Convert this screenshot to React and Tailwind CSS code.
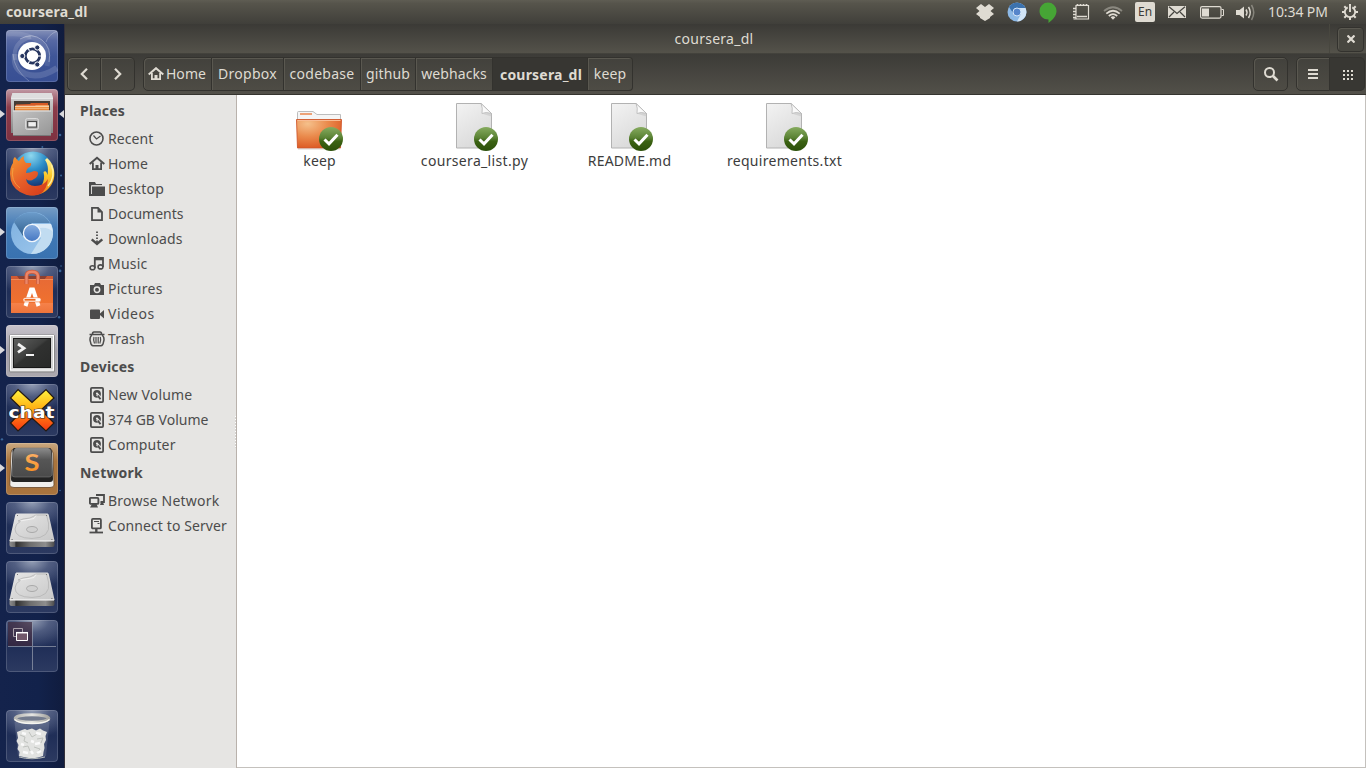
import React from "react";

/* ---------- launcher ---------- */

const tileBase =
  "relative flex h-[52px] w-[52px] shrink-0 rounded-[4px] shadow-[inset_0_0_0_1px_rgba(255,255,255,0.16)]";

const GLASS =
  "bg-[radial-gradient(ellipse_75%_55%_at_50%_0%,rgba(165,175,195,0.85),rgba(120,132,162,0.45)_45%,rgba(60,75,115,0)),linear-gradient(#35426a,#1f2e57_50%,#2c3a61)]";

function Art({ children }) {
  return (
    <svg viewBox="0 0 52 52" className="h-[52px] w-[52px]">
      {children}
    </svg>
  );
}

function DashIcon() {
  return (
    <Art>
      <g fill="none" stroke="#fff">
        <path d="M14 9Q26 2 36 10Q46 18 43 32" strokeWidth="1" opacity=".35" />
        <path d="M1 4Q20 2 34 12Q44 20 41 36" strokeWidth="5" opacity=".1" />
        <path d="M9 24Q7 40 20 44Q34 49 51 38" strokeWidth="6" opacity=".14" />
        <path d="M9 30Q6 12 25 7" strokeWidth="4" opacity=".14" />
        <path d="M7 24Q8 40 23 51M51 1Q42 5 40 12" strokeWidth="1" opacity=".25" />
      </g>
      <circle cx="26" cy="26" r="14" fill="#fff" />
      <circle cx="26.500" cy="26" r="7.200" fill="none" stroke="#26355f" strokeWidth="2.800" />
      <path d="M32 26h4M23.500 20.800l-2-3.500M23.500 31.200l-2 3.500" stroke="#fff" strokeWidth="1.100" />
      <g fill="#26355f" stroke="#fff" strokeWidth="1">
        <circle cx="16.300" cy="26" r="2.600" />
        <circle cx="31.300" cy="17.500" r="2.600" />
        <circle cx="31.300" cy="34.500" r="2.600" />
      </g>
    </Art>
  );
}

function FilesIcon() {
  return (
    <Art>
      <defs>
        <linearGradient id="cab" x2="0" y2="1">
          <stop stopColor="#dcdcdc" />
          <stop offset=".2" stopColor="#c8c8c8" />
          <stop offset="1" stopColor="#858585" />
        </linearGradient>
        <linearGradient id="drawer" x2="1" y2="1">
          <stop stopColor="#c4c4c4" />
          <stop offset="1" stopColor="#969696" />
        </linearGradient>
        <linearGradient id="papers" x2="0" y2="1">
          <stop stopColor="#f6a04e" />
          <stop offset="1" stopColor="#e37f33" />
        </linearGradient>
      </defs>
      <path d="M6.500 4h39L47 9v35H5V9z" fill="url(#cab)" />
      <path d="M6.500 4h39L47 9H5z" fill="#dedede" />
      <path d="M5 9.500h42" stroke="#efefef" strokeWidth=".8" />
      <path d="M8 12h36v10H8z" fill="#453c36" />
      <path d="M10 15.500L24 15l1-1h17v6H10z" fill="#d65a26" />
      <path d="M9 17h20l1-.8h13V22H9z" fill="url(#papers)" />
      <path d="M9 17.300h34" stroke="#f8e0c4" strokeWidth="1.100" />
      <path d="M9 19.500h34" stroke="#f9c898" strokeWidth=".6" />
      <path d="M7 21.500h38V47H7z" fill="url(#drawer)" />
      <path d="M7 22h38" stroke="#e6e6e6" />
      <path d="M7 46.500h38" stroke="#787878" />
      <rect x="19.500" y="29.500" width="13" height="11" rx="2" fill="#b9b9b9" stroke="#dadada" />
      <rect x="21.700" y="32.500" width="8.800" height="5.600" fill="#efefef" stroke="#4c4c4c" strokeWidth="1.200" />
    </Art>
  );
}

function FirefoxIcon() {
  return (
    <Art>
      <defs>
        <radialGradient id="globe" cx=".45" cy=".1" r=".8">
          <stop stopColor="#8fd8ee" />
          <stop offset=".45" stopColor="#2b8dc8" />
          <stop offset="1" stopColor="#122e6c" />
        </radialGradient>
        <linearGradient id="fox" x2=".8" y2="1">
          <stop stopColor="#f59a2f" />
          <stop offset=".5" stopColor="#e8612a" />
          <stop offset="1" stopColor="#d63e1c" />
        </linearGradient>
        <linearGradient id="tail" x2="0" y2="1">
          <stop stopColor="#fff3a0" />
          <stop offset=".45" stopColor="#fbc92a" />
          <stop offset="1" stopColor="#ee7d1d" />
        </linearGradient>
      </defs>
      <circle cx="27" cy="24" r="20.500" fill="url(#globe)" />
      <path d="M41 10C50 17 51 32 43 40C38 46 30 48 22 47C35 42 40 34 37.500 24C40 22 41 25 41.500 27C42.500 21 42 16 39 12z" fill="url(#tail)" />
      <path d="M7 15Q7 10 9 9Q11 12 13 13Q15 9 18 8Q17 12 20 15L25 15Q26 18 22 20Q20 22 20 25Q24 25 28 23Q32 23 32 25Q32 29 28 31Q24 34 20 31Q21 38 29 38Q38 38 42 31Q41 42 34 46Q24 50 14 44Q4 38 4 26Q4 19 7 15z" fill="url(#fox)" />
      <path d="M7 20Q4 33 14 40" fill="none" stroke="#f8b74b" strokeWidth="1" opacity=".6" />
      <path d="M45.500 17Q50 29 42 38" fill="none" stroke="#fff1a1" strokeWidth="1.400" />
    </Art>
  );
}

function ChromiumIcon() {
  return (
    <Art>
      <defs>
        <linearGradient id="cr1" x2="0" y2="1">
          <stop stopColor="#6c9ccb" />
          <stop offset="1" stopColor="#326291" />
        </linearGradient>
        <linearGradient id="cr2" x2="1" y2="1">
          <stop stopColor="#7db0df" />
          <stop offset="1" stopColor="#9fc8ed" />
        </linearGradient>
        <linearGradient id="cr3" x2="0" y2="1">
          <stop stopColor="#87aedf" />
          <stop offset="1" stopColor="#4476c2" />
        </linearGradient>
      </defs>
      <circle cx="26" cy="26" r="21" fill="url(#cr2)" />
      <path d="M8 15A21 21 0 0 1 44 16H26L17 29z" fill="url(#cr1)" />
      <path d="M26 17H45A21 21 0 0 1 25 47L35 31z" fill="#c1dcf1" />
      <path d="M27 17H45L47 25Q42 20 34 21z" fill="#e4f0f9" opacity=".7" />
      <circle cx="26" cy="26" r="8.600" fill="url(#cr3)" stroke="#f2f7fc" strokeWidth="1.300" />
    </Art>
  );
}

function SoftwareIcon() {
  return (
    <Art>
      <defs>
        <linearGradient id="bag" x2="0" y2="1">
          <stop stopColor="#e76a35" />
          <stop offset=".7" stopColor="#f0712f" />
          <stop offset=".72" stopColor="#f58149" />
          <stop offset="1" stopColor="#ee743b" />
        </linearGradient>
      </defs>
      <path d="M5 10h7l2 3.500H5zM47 10h-7l-2 3.500h9z" fill="#d05a33" />
      <path d="M11 10h30l-3 4H14z" fill="#8d4030" />
      <path d="M5 13h42v34H5z" fill="url(#bag)" />
      <path d="M5 13.500h42" stroke="#f28c59" />
      <path d="M20.500 18V10Q20.500 5.700 26 5.700T32 10V18" fill="none" stroke="#c9583a" strokeWidth="4" />
      <path d="M20.500 18V10Q20.500 5.700 26 5.700T32 10V18" fill="none" stroke="#ec8667" strokeWidth="2.400" />
      <path d="M19.500 40L25 23.500h2L32.500 40" fill="none" stroke="#fff" strokeWidth="4" />
      <rect x="17" y="31.700" width="18" height="4.200" rx="2" fill="#fff" stroke="#ef7033" strokeWidth=".6" />
      <path d="M18.500 33.800h11" stroke="#ee6a20" strokeWidth="1.800" />
    </Art>
  );
}

function TerminalIcon() {
  return (
    <Art>
      <defs>
        <linearGradient id="term" x2="1" y2="1">
          <stop stopColor="#5f605f" />
          <stop offset=".45" stopColor="#3e3f3e" />
          <stop offset=".5" stopColor="#303130" />
          <stop offset="1" stopColor="#292a29" />
        </linearGradient>
      </defs>
      <rect x="3.500" y="10" width="45" height="37" rx="1" fill="#d2d2d2" stroke="#888" />
      <rect x="4.500" y="10.500" width="43" height="34.500" fill="none" stroke="#fff" />
      <rect x="7.500" y="13.500" width="37" height="29" fill="url(#term)" stroke="#171717" />
      <path d="M12 19l6 4.200-6 4.200" fill="none" stroke="#f2f2f2" strokeWidth="2.800" />
      <path d="M20 30h8" stroke="#f2f2f2" strokeWidth="2" />
    </Art>
  );
}

function XChatIcon() {
  return (
    <Art>
      <defs>
        <linearGradient id="xc" x2="0" y2="1">
          <stop offset=".05" stopColor="#ffec3a" />
          <stop offset=".45" stopColor="#ffb113" />
          <stop offset=".7" stopColor="#ff6b12" />
          <stop offset="1" stopColor="#f43712" />
        </linearGradient>
      </defs>
      <path d="M12 5.500L26 18.500 40 5.500 48 14 35 26 48 39 40 47 26 34 12 47 4.500 39 17 26 4.500 14z" fill="url(#xc)" stroke="#241a12" strokeWidth="1.200" />
      <text x="25.500" y="34.200" textAnchor="middle" textLength="46" lengthAdjust="spacingAndGlyphs" fontFamily="DejaVu Sans" fontWeight="bold" fontSize="15" fill="#fff" stroke="#3a3128" strokeWidth="1" paintOrder="stroke">
        chat
      </text>
    </Art>
  );
}

function SublimeIcon() {
  return (
    <Art>
      <defs>
        <linearGradient id="key" x2="0" y2="1">
          <stop stopColor="#8c8c8c" />
          <stop offset=".4" stopColor="#565656" />
          <stop offset="1" stopColor="#4a4a4a" />
        </linearGradient>
        <linearGradient id="ess" x2="0" y2="1">
          <stop stopColor="#fbb878" />
          <stop offset="1" stopColor="#f98a14" />
        </linearGradient>
      </defs>
      <path d="M8 6Q5 6 5 10L3.800 42Q4 44.500 8 44.500H44Q48 44.500 48 42L47 10Q46 6 44 6z" fill="#f0efed" stroke="#664628" strokeWidth=".8" />
      <path d="M8 5H44Q46 6 46 10L47 36Q47 39 44 39H8Q5 39 5 36L6.500 10Q6 6 8 5z" fill="#232323" />
      <path d="M10 5H42Q45 6 45 9L46 32Q45 34 43 34H9Q6 34 6 32L7.500 9Q8 6 10 5z" fill="url(#key)" stroke="#777" strokeWidth=".6" />
      <text x="26" y="28" textAnchor="middle" textLength="15" lengthAdjust="spacingAndGlyphs" fontFamily="Lato" fontWeight="bold" fontSize="23" fill="url(#ess)">
        S
      </text>
    </Art>
  );
}

function DriveIcon() {
  return (
    <Art>
      <defs>
        <linearGradient id="hd" x2="1" y2="1">
          <stop stopColor="#e6e6e6" />
          <stop offset="1" stopColor="#c8c8c8" />
        </linearGradient>
        <linearGradient id="hdf">
          <stop stopColor="#8d8d8d" />
          <stop offset=".12" stopColor="#6a6a6a" />
          <stop offset=".14" stopColor="#2e2e2e" />
          <stop offset=".45" stopColor="#6d6d6d" />
          <stop offset=".8" stopColor="#8e8e8e" />
          <stop offset="1" stopColor="#4b4b4b" />
        </linearGradient>
      </defs>
      <path d="M3.500 38h45v5q0 2-2 2h-41q-2 0-2-2z" fill="url(#hdf)" />
      <path d="M10.500 11.500h31q1 0 1.300 1.500L48.600 39H3.400L9.200 13Q9.500 11.500 10.500 11.500z" fill="url(#hd)" />
      <path d="M4 39h44" stroke="#fff" strokeWidth="1.200" />
      <path d="M12 19Q16 16.500 24 16L30 13H40.500L42.500 21Q45 36 26 36.500Q9 36 9 27Q9 22 15 19z" fill="none" stroke="#b5b5b5" strokeWidth=".8" />
      <path d="M14 19L28 16.500 30 13.500" fill="none" stroke="#f5f5f5" strokeWidth=".8" />
      <ellipse cx="26" cy="27.500" rx="5.500" ry="3" fill="#d0d0d0" stroke="#a5a5a5" strokeWidth=".9" />
      <path d="M5.500 37.500h1.200M46.500 37.500h-1.200M11 13.500h1M40 13.500h1" stroke="#777" />
    </Art>
  );
}

function WorkspaceIcon() {
  return (
    <Art>
      <path d="M2 2h24v24H2z" fill="#3d2538" opacity=".66" />
      <path d="M26.500 2v48M2 26.500h48" stroke="#99a0b0" opacity=".7" />
      <path d="M7.500 8.500h9v8h-9z" fill="none" stroke="#aaa1aa" />
      <path d="M10.500 12.500h11v8h-11z" fill="#71586a" stroke="#fff" />
      <path d="M10 12.700h12" stroke="#fff" strokeWidth="1.500" />
    </Art>
  );
}

function TrashCanIcon() {
  return (
    <Art>
      <defs>
        <linearGradient id="rim">
          <stop stopColor="#b4b4b0" />
          <stop offset=".5" stopColor="#e6e6e2" />
          <stop offset="1" stopColor="#a4a4a0" />
        </linearGradient>
      </defs>
      <path d="M9 12L12.500 46Q26 50 39.500 46L43 12z" fill="#ccd3dd" opacity=".18" stroke="#dde" strokeWidth=".8" />
      <path d="M11 22l5-2 3-1 2 1 5-1.500 4 2 4-2 3 2 4 1.500-1.500 4 .5 4-2 4 .5 4-1 4-.5 4-5 1.500Q26 48.500 20 47.500L13 46l.5-4-2-3 1-4-2-4 1.500-3z" fill="#e2e3e1" />
      <path d="M14 25l5 2-1 4 4 2M23 22l3 5 5-3M31 29l6-1-2 5M17 37l5-1 2 5M28 37l6 2-3 5" fill="none" stroke="#bfc2be" strokeWidth="1" />
      <path d="M16 23l4 1M30 23l5 1M25 31l3 1M15 34l3 1M17 42l5 1M29 34l5-1M31 43l4-2M25 41l2 3" stroke="#fafafa" strokeWidth="2.400" />
      <path d="M13 47Q26 50.500 39 47" fill="none" stroke="#c5c9c5" strokeWidth=".9" />
      <ellipse cx="26" cy="8.500" rx="16.800" ry="3.800" fill="#747c8e" stroke="url(#rim)" strokeWidth="3" />
      <path d="M8.500 9.500Q13 13.500 26 13.500T43.500 9.500" fill="none" stroke="#f5f5f0" strokeWidth="1.400" />
    </Art>
  );
}

const launchers = [
  { id: "dash", art: <DashIcon />, bg: "bg-[linear-gradient(#8490b8,#5769a4_20%,#3f5697_50%,#384f94)]" },
  { id: "files", art: <FilesIcon />, bg: "bg-[linear-gradient(#c19aa5,#8c3c4a_35%,#7d3141)]", left: true, right: true },
  { id: "firefox", art: <FirefoxIcon />, bg: GLASS },
  { id: "chromium", art: <ChromiumIcon />, bg: "bg-[linear-gradient(#769dc5,#4179b6_40%,#3972b0)]", left: true },
  { id: "software", art: <SoftwareIcon />, bg: GLASS },
  { id: "terminal", art: <TerminalIcon />, bg: "bg-[linear-gradient(#c8c4cc,#a29fa8_50%,#aba8ae)]", left: true },
  { id: "xchat", art: <XChatIcon />, bg: GLASS },
  { id: "sublime", art: <SublimeIcon />, bg: "bg-[linear-gradient(#caa981,#a8733c_35%,#a9743e)]", left: true },
  { id: "drive1", art: <DriveIcon />, bg: GLASS },
  { id: "drive2", art: <DriveIcon />, bg: GLASS },
  { id: "workspace", art: <WorkspaceIcon />, bg: GLASS },
];

function Launcher() {
  return (
    <aside className="relative flex w-[65px] shrink-0 flex-col border-r border-[#33303a] bg-[linear-gradient(90deg,#14234c,#12224b_60%,#101c3e)] pb-1.5">
      <svg className="absolute inset-0 h-full w-full" viewBox="0 0 65 744" fill="#4a83bb">
        <g opacity=".7">
          <circle cx="61" cy="107" r="1.300" />
          <circle cx="43" cy="119" r="1" />
          <circle cx="62" cy="148" r="1" />
          <circle cx="64" cy="161" r="1" />
          <circle cx="61" cy="245" r="1.400" />
          <circle cx="60" cy="292" r="1.200" />
          <circle cx="62" cy="240" r=".8" />
          <circle cx="2" cy="416" r="1.200" />
          <circle cx="61" cy="468" r=".8" />
        </g>
      </svg>
      <div className="flex flex-col gap-[7px] pt-[6px]">
        {launchers.map((l) => (
          <div key={l.id} className="relative flex pl-1.5">
            {l.left && (
              <svg viewBox="0 0 5 8" className="absolute left-0 top-[21px] h-2 w-[5px]">
                <path d="M0 0L5 4 0 8z" fill="#d9d9dd" />
              </svg>
            )}
            <div className={`${tileBase} ${l.bg}`}>{l.art}</div>
            {l.right && (
              <svg viewBox="0 0 5 8" className="absolute right-0 top-[21px] h-2 w-[5px]">
                <path d="M5 0L0 4 5 8z" fill="#d9d9dd" />
              </svg>
            )}
          </div>
        ))}
      </div>
      <div className="relative mt-auto flex pl-1.5">
        <div className={`${tileBase} ${GLASS}`}>
          <TrashCanIcon />
        </div>
      </div>
    </aside>
  );
}

/* ---------- top panel ---------- */

function TopPanel() {
  return (
    <header className="flex h-6 shrink-0 items-center bg-[linear-gradient(#5f5d53,#56544b_15%,#403f3a)] text-[#dfdbd2]">
      <span className="pl-1.5 text-[14px] font-bold leading-6 tracking-[0.15px]">coursera_dl</span>
      <div className="ml-auto flex items-center pr-2">
        <svg viewBox="0 0 18 17" className="h-[17px] w-[18px]" fill="#dfdbd2">
          <path d="M5 0L9 3 13 0 18 4 14.500 7 18 10 14 13V14L9 17 4 14V13L0 10 3.500 7 0 4z" />
        </svg>
        <svg viewBox="0 0 20 20" className="ml-[13px] h-5 w-[20px]">
          <circle cx="10" cy="10" r="9.500" fill="#8db9e6" />
          <path d="M2 5A9.500 9.500 0 0 1 18.500 6H10L6 11z" fill="#3c72ae" />
          <path d="M10 6H18.500A9.500 9.500 0 0 1 10 19.500L14 12z" fill="#d3e5f6" />
          <circle cx="10" cy="10" r="4" fill="#5685cb" stroke="#d5e5f7" />
        </svg>
        <svg viewBox="0 0 18 21" className="ml-[12px] h-[21px] w-[18px]" fill="#46a535">
          <path d="M9 .5a8.500 8.500 0 0 1 8.500 8.500c0 5-4 9-8 12v-3.500C4.500 17.500.5 14 .5 9A8.500 8.500 0 0 1 9 .5z" />
        </svg>
        <svg viewBox="0 0 18 18" className="ml-[15px] h-[18px] w-[18px]" fill="none" stroke="#dfdbd2">
          <path d="M5.500 2.500V1M8.500 2.500V1M11.500 2.500V1M14.500 2.500V1" strokeWidth="1.800" />
          <path d="M4 2.500h12.500v13.500h-15M4 2v14" strokeWidth="1.200" />
          <path d="M1 5.500h3M1 8.500h3M1 11.500h3M1 14.500h3" strokeWidth="1.600" />
          <path d="M5 13.500h10" strokeWidth="1.500" />
        </svg>
        <svg viewBox="0 0 20 14" className="ml-[13px] mt-[2px] h-[14px] w-[20px]" fill="none" stroke="#dfdbd2" strokeWidth="1.700">
          <path d="M1 5Q10-2.500 19 5" opacity=".4" />
          <path d="M3.300 7.700Q10 1.800 16.700 7.700" />
          <path d="M5.800 10Q10 6.300 14.200 10" />
          <path d="M7.600 11.300Q10 9.300 12.400 11.300L10 13.800z" fill="#dfdbd2" stroke="none" />
        </svg>
        <span className="ml-[12px] flex h-5 w-5 items-center justify-center rounded-[2px] bg-[#dfdbd2] text-[12px] leading-none text-[#3c3b37]">
          En
        </span>
        <svg viewBox="0 0 18 12" className="ml-[13px] h-3 w-[18px]">
          <path d="M0 0h18v12H0z" fill="#dfdbd2" />
          <path d="M1 .8L9 7.500 17 .8M1 11L6 6M17 11L12 6" fill="none" stroke="#45443f" strokeWidth="1.200" />
        </svg>
        <svg viewBox="0 0 24 13" className="ml-[14px] h-[13px] w-[24px]" fill="none" stroke="#dfdbd2">
          <rect x=".6" y=".6" width="20.400" height="11.500" rx="1.500" strokeWidth="1.200" />
          <path d="M21.500 3.500h2v6h-2" />
          <path d="M2 2.500h7v8H2z" fill="#dfdbd2" stroke="none" />
        </svg>
        <svg viewBox="0 0 20 17" className="ml-[12px] h-[17px] w-[20px]" fill="none" stroke="#dfdbd2" strokeWidth="1.500">
          <path d="M0 6h3.500L8 2.500v12L3.500 11H0z" fill="#dfdbd2" stroke="none" />
          <path d="M10 5.500Q12 8.500 10 11.500" />
          <path d="M12.500 3Q16 8.500 12.500 14" />
          <path d="M15.500 1Q20 8.500 15.500 16" opacity=".4" />
        </svg>
        <span className="ml-[12px] w-[61px] whitespace-nowrap text-[14px] leading-6 tracking-[-0.1px]">10:34 PM</span>
        <svg viewBox="0 0 16 16" className="ml-[13px] h-4 w-4" fill="none" stroke="#dfdbd2">
          <path d="M5.700 3.300A5.200 5.200 0 1 0 10.300 3.300" strokeWidth="1.900" />
          <path d="M8 2v6" strokeWidth="1.900" />
          <path d="M2.300 2.300l2 2M13.700 2.300l-2 2M0 8h3M16 8h-3M2.300 13.700l2-2M13.700 13.700l-2-2M8 13v3M8 0v2" strokeWidth="2" />
        </svg>
      </div>
    </header>
  );
}

/* ---------- window chrome ---------- */

const button =
  "flex items-center justify-center border-[#33322e] shadow-[inset_1px_1px_0_#5a5850] text-[#dfdbd2]";

function HomeGlyph() {
  return (
    <svg viewBox="0 0 16 14" className="h-[14px] w-4 shrink-0" fill="none" stroke="currentColor">
      <path d="M.7 7.500L8 1.200l7.300 6.300" strokeWidth="2" />
      <path d="M3.900 6v6.100h8.200V6" strokeWidth="1.800" />
      <path d="M6.500 12V8h3v4z" fill="currentColor" stroke="none" />
    </svg>
  );
}

const crumbs = [
  { name: "Dropbox", cls: "w-[72px] tracking-[0.3px]" },
  { name: "codebase", cls: "w-[77px] tracking-[0.25px]" },
  { name: "github", cls: "w-[55px] tracking-[0.1px]" },
  { name: "webhacks", cls: "w-[77px] tracking-[0.1px]" },
  { name: "coursera_dl", cls: "w-[95px] bg-[#373632] font-bold shadow-none pt-px pl-0.5 tracking-[0.2px]" },
  { name: "keep", cls: "w-[45px] rounded-r-[4px] tracking-[0.1px]" },
];

function TitleBar() {
  return (
    <div className="flex h-[29px] shrink-0 items-stretch bg-[linear-gradient(#3b3a36,#54524a)] text-[#dfdbd2]">
      <div className="w-[34px] shrink-0" />
      <div className="flex flex-1 items-center justify-center pb-px text-[14px] tracking-[0.25px]">coursera_dl</div>
      <div className="flex w-[37px] shrink-0 items-center border-l border-[#48473f] pl-[7px] pt-px">
        <div className={`${button} h-[25px] w-[27px] rounded-[4px] border bg-[#484740]`}>
          <svg viewBox="0 0 8 8" className="h-2 w-2" stroke="currentColor" strokeWidth="2.200">
            <path d="M.5.5l7 7M7.500.5l-7 7" />
          </svg>
        </div>
      </div>
    </div>
  );
}

function Toolbar() {
  return (
    <div className="flex h-[42px] shrink-0 items-center border-b border-t border-b-[#35342f] border-t-[#43423c] bg-[linear-gradient(#3c3b37,#525049)] pb-px pl-[2px] pr-[1px] text-[14px] text-[#dfdbd2]">
      <div className="flex h-[34px] rounded-[5px] bg-[linear-gradient(#42413c,#4e4c45)]">
        <div className={`${button} w-[34px] rounded-l-[5px] border`}>
          <svg viewBox="0 0 8 12" className="h-3 w-2" fill="none" stroke="currentColor" strokeWidth="2.200">
            <path d="M7 .8L1.800 6 7 11.200" />
          </svg>
        </div>
        <div className={`${button} w-[34px] rounded-r-[5px] border border-l-0`}>
          <svg viewBox="0 0 8 12" className="h-3 w-2" fill="none" stroke="currentColor" strokeWidth="2.200">
            <path d="M1 .8L6.200 6 1 11.200" />
          </svg>
        </div>
      </div>
      <nav className="ml-[8px] flex h-[34px] rounded-[5px] bg-[linear-gradient(#42413c,#4e4c45)]">
        <div className={`${button} w-[69px] rounded-l-[5px] border pr-px`}>
          <HomeGlyph />
          <span className="ml-[2px] tracking-[0.1px]">Home</span>
        </div>
        {crumbs.map((c) => (
          <div key={c.name} className={`${button} whitespace-nowrap border border-l-0 ${c.cls}`}>
            {c.name}
          </div>
        ))}
      </nav>
      <div className={`${button} ml-auto h-[34px] w-[35px] rounded-[5px] border bg-[linear-gradient(#42413c,#4e4c45)]`}>
        <svg viewBox="0 0 16 16" className="h-4 w-4" fill="none" stroke="currentColor">
          <circle cx="6.500" cy="6.500" r="4.500" strokeWidth="2" />
          <path d="M10 10l4.500 4.500" strokeWidth="2.600" />
        </svg>
      </div>
      <div className="ml-[8px] flex h-[34px] rounded-[5px] bg-[linear-gradient(#42413c,#4e4c45)]">
        <div className={`${button} w-[34px] rounded-l-[5px] border`}>
          <svg viewBox="0 0 10 10" className="h-2.5 w-2.5" fill="currentColor">
            <path d="M0 0h10v2H0zM0 4h10v2H0zM0 8h10v2H0z" />
          </svg>
        </div>
        <div className="flex w-[35px] items-center justify-center rounded-r-[5px] border border-l-0 border-[#33322e] bg-[#383733] pl-px">
          <svg viewBox="0 0 10 10" className="mt-0.5 h-2.5 w-2.5" fill="currentColor">
            <path d="M0 0h2v2H0zM4 0h2v2H4zM8 0h2v2H8zM0 4h2v2H0zM4 4h2v2H4zM8 4h2v2H8zM0 8h2v2H0zM4 8h2v2H4zM8 8h2v2H8z" />
          </svg>
        </div>
      </div>
    </div>
  );
}

/* ---------- sidebar ---------- */

function Glyph({ children }) {
  return (
    <svg viewBox="0 0 16 16" className="h-4 w-4 shrink-0" fill="none" stroke="#4c4c4c" strokeWidth="1.600">
      {children}
    </svg>
  );
}

const glyphs = {
  recent: (
    <>
      <circle cx="7.500" cy="7.500" r="6.500" />
      <path d="M4.500 4.500L7.500 8l4-3" strokeWidth="1.200" />
    </>
  ),
  home: (
    <>
      <path d="M.7 8L8 1.700 15.300 8" strokeWidth="2" />
      <path d="M3.900 6.500v6.600h8.200V6.500" strokeWidth="1.800" />
      <path d="M6.500 13V9h3v4z" fill="#4c4c4c" stroke="none" />
    </>
  ),
  desktop: (
    <>
      <path d="M0 1h6l1 2h6v2H3v9H0z" fill="#4c4c4c" stroke="none" />
      <path d="M3 5.500h13V15H0V13z" fill="#4c4c4c" stroke="none" />
      <path d="M2.500 13V4.500H14" stroke="#e6e5e3" strokeWidth=".9" />
    </>
  ),
  documents: (
    <>
      <path d="M3 1.800h6L13 6v8.200H3z" strokeWidth="1.800" />
      <path d="M8.500 1v5.500H13z" fill="#4c4c4c" stroke="none" />
    </>
  ),
  downloads: (
    <>
      <path d="M8 .5V2M8 3.500V5M8 6.500V8" strokeWidth="1.800" />
      <path d="M8 9.500V13" strokeWidth="1.800" />
      <path d="M2.700 8.300L8 13l5.300-4.700" strokeWidth="2.400" />
    </>
  ),
  music: (
    <>
      <path d="M5.800 12V2H14v9" strokeWidth="1.800" />
      <path d="M5.800 3.500H14" />
      <ellipse cx="3.500" cy="11.800" rx="2.400" ry="2" />
      <ellipse cx="11.500" cy="10.900" rx="2.400" ry="2" />
    </>
  ),
  pictures: (
    <>
      <path d="M1 4h4l1-2h5l1 2h3v10H1z" fill="#4c4c4c" stroke="none" />
      <circle cx="8" cy="8.700" r="2.700" stroke="#e6e5e3" strokeWidth="1.500" />
    </>
  ),
  videos: <path d="M2 3.500h8q1 0 1 1v3l4-3.500v8.500L11 9v3q0 1-1 1H2q-1 0-1-1V4.500q0-1 1-1z" fill="#4c4c4c" stroke="none" />,
  trash: (
    <>
      <path d="M.5 3.500h15M3.500 3Q3.500 1 5 1h6Q12.500 1 12.500 3" />
      <path d="M2.800 4Q0 7 1.500 11Q2 14.800 4 14.800h8Q14 14.800 14.500 11Q16 7 13.200 4" strokeWidth="1.500" />
      <path d="M5 6q-1 3 .5 6.500M7 6v6.500M9.200 6v6.500M11.300 6q1 3-.5 6.500" strokeWidth="1.200" />
    </>
  ),
  disk: (
    <>
      <rect x="1.900" y=".9" width="12.200" height="14.200" rx="1" strokeWidth="1.800" />
      <circle cx="8" cy="6.800" r="3.900" fill="#4c4c4c" stroke="none" />
      <circle cx="8" cy="6.500" r="1.100" fill="#e6e5e3" stroke="none" />
      <path d="M8.200 7.200l3.500 4.800" stroke="#e6e5e3" strokeWidth="2.800" />
      <path d="M8.800 8.500l2.700 3.800" strokeWidth="1.900" />
    </>
  ),
  network: (
    <>
      <path d="M7 2h8v7h-3.500" strokeWidth="1.800" />
      <rect x=".9" y="4.900" width="8.500" height="6" rx="1" strokeWidth="1.900" />
      <path d="M3 11h4.500l1.500 3.500H1zM12 9h2l1 3h-4z" fill="#4c4c4c" stroke="none" />
    </>
  ),
  server: (
    <>
      <rect x="2.900" y=".9" width="9" height="9.500" rx="1" strokeWidth="1.800" />
      <path d="M5 3.500h5M8.500 5.500h2" strokeWidth="1" />
      <path d="M7.300 10v4.500" strokeWidth="2.400" />
      <path d="M.5 14.500h13.500" strokeWidth="1.800" />
    </>
  ),
};

const sections = [
  {
    title: "Places",
    items: [
      ["recent", "Recent", "tracking-[0.1px]"],
      ["home", "Home", ""],
      ["desktop", "Desktop", "tracking-[0.25px]"],
      ["documents", "Documents", ""],
      ["downloads", "Downloads", "tracking-[0.15px]"],
      ["music", "Music", "tracking-[0.2px]"],
      ["pictures", "Pictures", "tracking-[0.25px]"],
      ["videos", "Videos", "tracking-[0.5px]"],
      ["trash", "Trash", "tracking-[0.2px]"],
    ],
  },
  {
    title: "Devices",
    items: [
      ["disk", "New Volume", "tracking-[0.15px]"],
      ["disk", "374 GB Volume", ""],
      ["disk", "Computer", "tracking-[0.15px]"],
    ],
  },
  {
    title: "Network",
    items: [
      ["network", "Browse Network", "tracking-[0.22px]"],
      ["server", "Connect to Server", "tracking-[0.1px]"],
    ],
  },
];

function Sidebar() {
  return (
    <aside className="relative w-[172px] shrink-0 border-r border-[#b9b2ac] bg-[#e6e5e3] text-[14px] text-[#4c4c4c]">
      {sections.map((s) => (
        <section key={s.title}>
          <h2 className="flex h-[31px] items-center pl-[15px] font-bold tracking-[0.2px]">{s.title}</h2>
          {s.items.map(([icon, label, spacing]) => (
            <div key={label} className="flex h-[25px] items-center whitespace-nowrap pl-6">
              <Glyph>{glyphs[icon]}</Glyph>
              <span className={`ml-[3px] ${spacing}`}>{label}</span>
            </div>
          ))}
        </section>
      ))}
      <div className="absolute right-0 top-[321px] h-8 w-px bg-[repeating-linear-gradient(#fff_0_1px,#d5d3d0_1px_3px)]" />
    </aside>
  );
}

/* ---------- files ---------- */

function Badge() {
  return (
    <>
      <circle cx="36" cy="37" r="12" fill="url(#ok)" />
      <path d="M29.500 37.500l4.500 4.300 8.500-9" fill="none" stroke="#fff" strokeWidth="3" />
    </>
  );
}

function FolderArt() {
  return (
    <svg viewBox="0 0 48 50" className="mr-0.5 h-[50px] w-12">
      <defs>
        <linearGradient id="ok" x2="0" y2="1">
          <stop stopColor="#86ab5f" />
          <stop offset=".45" stopColor="#5a8234" />
          <stop offset=".6" stopColor="#3b6213" />
          <stop offset="1" stopColor="#2c500a" />
        </linearGradient>
        <radialGradient id="fold" cx=".25" cy=".15" r="1">
          <stop stopColor="#f5c08b" />
          <stop offset=".45" stopColor="#ea8a4c" />
          <stop offset="1" stopColor="#d84b18" />
        </radialGradient>
      </defs>
      <path d="M2.500 20V10.500Q2.500 9.500 3.500 9.500H18L22 12.500H45.500V20z" fill="#f5f5f5" stroke="#b5b5b5" strokeWidth=".9" />
      <path d="M5 12h12" stroke="#eda277" strokeWidth="2" />
      <path d="M1.500 17.500H46.500L45.500 46H2.500z" fill="url(#fold)" stroke="#cf562a" strokeWidth=".9" />
      <path d="M2.500 18.500h43" stroke="#f9bb92" />
      <path d="M3 47h42" stroke="#bbb" opacity=".6" />
      <Badge />
    </svg>
  );
}

function FileArt() {
  return (
    <svg viewBox="0 0 48 50" className="mr-0.5 h-[50px] w-12">
      <defs>
        <linearGradient id="page" x2=".5" y2="1">
          <stop stopColor="#f3f3f3" />
          <stop offset="1" stopColor="#dadada" />
        </linearGradient>
      </defs>
      <path d="M6.500 1.500H31L41.500 11.500V46H6.500z" fill="url(#page)" stroke="#b2b2b2" />
      <path d="M31 1.500L41.500 11.500Q36 9.500 32 11.500Q33 6 31 1.500z" fill="#fafafa" stroke="#b5b5b5" strokeWidth=".8" />
      <path d="M31.500 11.500Q36 10 41.500 12v2.500z" fill="#c7c7c7" opacity=".6" />
      <Badge />
    </svg>
  );
}

const files = [
  { name: "keep", art: <FolderArt />, spacing: "tracking-[0.1px]" },
  { name: "coursera_list.py", art: <FileArt />, spacing: "tracking-[0.33px]" },
  { name: "README.md", art: <FileArt />, spacing: "tracking-[0.2px]" },
  { name: "requirements.txt", art: <FileArt />, spacing: "tracking-[0.3px]" },
];

export default function App() {
  return (
    <div className="flex h-[768px] w-[1366px] flex-col overflow-hidden bg-[#3c3b37] font-['Noto_Sans','Open_Sans',sans-serif]">
      <TopPanel />
      <div className="flex min-h-0 flex-1">
        <Launcher />
        <main className="flex min-w-0 flex-1 flex-col">
          <TitleBar />
          <Toolbar />
          <div className="flex min-h-0 flex-1">
            <Sidebar />
            <div className="flex flex-1 items-start border-b border-r border-[#c4c1bd] bg-white pl-[5px] pt-[7px] text-[14px] text-[#3c3c3c]">
              {files.map((f) => (
                <div key={f.name} className="flex w-[155px] flex-col items-center">
                  {f.art}
                  <span className={`whitespace-nowrap leading-[18px] ${f.spacing}`}>{f.name}</span>
                </div>
              ))}
            </div>
          </div>
        </main>
      </div>
    </div>
  );
}
